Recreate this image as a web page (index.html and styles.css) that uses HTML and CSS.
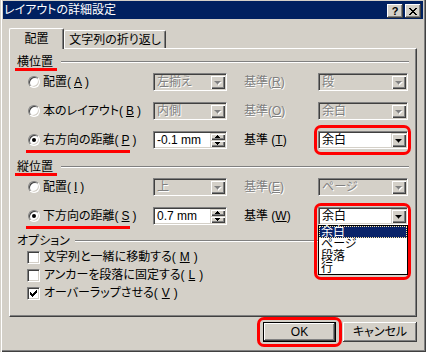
FILE: index.html
```html
<html>
    <head>
        <meta charset="utf-8">
        <title>レイアウトの詳細設定</title>
        <link rel="stylesheet" href="styles.css">
    </head>
    <body>
        <div class="window">
            <div class="titlebar">
                <span class="title">レイアウトの詳細設定</span>
                <span class="tbtn help">?</span>
                <span class="tbtn close">
                    <svg width="8" height="7" viewBox="0 0 8 7" shape-rendering="crispEdges"><path d="M0 0h2v1h1v1h2v-1h1v-1h2v1h-1v1h-1v1h-1v1h1v1h1v1h1v1h-2v-1h-1v-1h-2v1h-1v1h-2v-1h1v-1h1v-1h1v-1h-1v-1h-1v-1h-1z"/></svg>
                </span>
            </div>
            <div class="tabs">
                <div class="tab active">配置</div>
                <div class="tab">文字列の折り返し</div>
            </div>
            <div class="panel">
                <div class="group"><span class="gtitle mark">横位置</span><span class="rule"></span></div>
                <div class="rows">
                    <div class="row">
                        <label class="opt"><span class="radio"></span>配置(<u>A</u>)</label>
                        <div class="combo disabled"><span class="val">左揃え</span><span class="drop"><i></i></span></div>
                        <span class="lbl disabled">基準(<u>R</u>)</span>
                        <div class="combo wide disabled"><span class="val">段</span><span class="drop"><i></i></span></div>
                    </div>
                    <div class="row">
                        <label class="opt"><span class="radio"></span>本のレイアウト(<u>B</u>)</label>
                        <div class="combo disabled"><span class="val">内側</span><span class="drop"><i></i></span></div>
                        <span class="lbl disabled">基準(<u>O</u>)</span>
                        <div class="combo wide disabled"><span class="val">余白</span><span class="drop"><i></i></span></div>
                    </div>
                    <div class="row">
                        <label class="opt mark"><span class="radio on"></span>右方向の距離(<u>P</u>)</label>
                        <div class="combo"><span class="val">-0.1 mm</span><span class="spin"><span class="up"><i></i></span><span class="dn"><i></i></span></span></div>
                        <span class="lbl">基準 (<u>T</u>)</span>
                        <div class="combo wide hl"><span class="val">余白</span><span class="drop"><i></i></span></div>
                    </div>
                </div>

                <div class="group second"><span class="gtitle mark">縦位置</span><span class="rule"></span></div>
                <div class="rows">
                    <div class="row">
                        <label class="opt"><span class="radio"></span>配置(<u>I</u>)</label>
                        <div class="combo disabled"><span class="val">上</span><span class="drop"><i></i></span></div>
                        <span class="lbl disabled">基準(<u>E</u>)</span>
                        <div class="combo wide disabled"><span class="val">ページ</span><span class="drop"><i></i></span></div>
                    </div>
                    <div class="row">
                        <label class="opt mark"><span class="radio on"></span>下方向の距離(<u>S</u>)</label>
                        <div class="combo"><span class="val">0.7 mm</span><span class="spin"><span class="up"><i></i></span><span class="dn"><i></i></span></span></div>
                        <span class="lbl">基準 (<u>W</u>)</span>
                        <div class="combo wide hl open">
                            <span class="val">余白</span><span class="drop"><i></i></span>
                            <div class="list">
                                <div class="item sel">余白</div>
                                <div class="item">ページ</div>
                                <div class="item">段落</div>
                                <div class="item">行</div>
                            </div>
                        </div>
                    </div>
                </div>

                <div class="group third"><span class="gtitle">オプション</span><span class="rule"></span></div>
                <div class="checks">
                    <label class="chk"><span class="box"></span>文字列と一緒に移動する(<u>M</u>)</label>
                    <label class="chk"><span class="box"></span>アンカーを段落に固定する(<u>L</u>)</label>
                    <label class="chk"><span class="box on"><svg width="7" height="7" viewBox="0 0 7 7" shape-rendering="crispEdges"><path d="M0 2h1v3h-1zM1 3h1v3h-1zM2 4h1v3h-1zM3 3h1v3h-1zM4 2h1v3h-1zM5 1h1v3h-1zM6 0h1v3h-1z"/></svg></span>オーバーラップさせる(<u>V</u>)</label>
                </div>
            </div>
            <div class="footer">
                <button class="btn default hl">OK</button>
                <button class="btn">キャンセル</button>
            </div>
        </div>
    </body>
</html>
```

FILE: styles.css
```css
body{
    margin: 0;
    background: #d4d0c8;
    font-family: "Liberation Sans", "Noto Sans CJK JP", sans-serif;
    font-size: 12px;
    line-height: 12px;
    font-feature-settings: "palt";
    color: #000;
}
u{
    text-decoration-thickness: 1px;
    text-underline-offset: 1px;
}
.window{
    width: 426px;
    height: 352px;
    box-sizing: border-box;
    padding: 1px 3px 3px 3px;
    background: #d4d0c8;
    box-shadow: inset 1px 0 #d4d0c8, inset 2px 0 #fff, inset -1px -1px #404040, inset -2px -2px #808080;
}
.titlebar{
    display: flex;
    align-items: flex-start;
    height: 18px;
    padding: 0 2px 0 1px;
    background: #002060;
    color: #fff;
}
.title{
    flex: 1;
    line-height: 18px;
}
.tbtn{
    box-sizing: border-box;
    width: 16px;
    height: 14px;
    margin-top: 3px;
    display: flex;
    align-items: center;
    justify-content: center;
    background: #d4d0c8;
    color: #000;
    box-shadow: inset -1px -1px #404040, inset 1px 1px #fff, inset -2px -2px #808080;
}
.help{
    margin-right: 2px;
    font-weight: bold;
    font-size: 11px;
}
.tabs{
    display: flex;
    align-items: flex-end;
    height: 20px;
    margin-top: 9px;
    padding-left: 6px;
}
.tab{
    box-sizing: border-box;
    height: 18px;
    width: 102px;
    display: flex;
    align-items: center;
    justify-content: center;
    border: 1px solid;
    border-color: #fff #404040 transparent #fff;
    border-bottom: none;
    border-radius: 2px 2px 0 0;
    box-shadow: inset -1px 0 #808080;
    background: #d4d0c8;
}
.tab.active{
    width: 55px;
    height: 21px;
    margin-bottom: -1px;
    position: relative;
    z-index: 1;
}
.panel{
    box-sizing: border-box;
    height: 269px;
    margin: 0 6px;
    padding: 6px 7px 0 7px;
    border: 1px solid;
    border-color: #fff #404040 #404040 #fff;
    box-shadow: inset -1px -1px #808080;
}
.group{
    display: flex;
    align-items: center;
    height: 14px;
}
.group.second{
    margin-top: 11px;
}
.group.third{
    margin-top: 9px;
}
.gtitle{
    margin-right: 8px;
    white-space: nowrap;
}
.third .gtitle{
    margin-right: 5px;
}
.rule{
    flex: 1;
    border-top: 1px solid #808080;
    border-bottom: 1px solid #fff;
}
.mark{
    position: relative;
}
.gtitle.mark::after{
    content: '';
    position: absolute;
    left: -2px;
    right: -4px;
    bottom: -3px;
    height: 3px;
    background: #f00;
}
.opt.mark::after{
    content: '';
    position: absolute;
    left: -2px;
    width: 104px;
    bottom: -4px;
    height: 3px;
    background: #f00;
}
.rows{
    display: flex;
    flex-direction: column;
    gap: 11px;
    margin-top: 4px;
    padding-left: 11px;
}
.row{
    display: grid;
    grid-template-columns: 125px 90px 75px 90px;
    height: 18px;
    align-items: center;
}
.opt{
    display: flex;
    align-items: center;
    gap: 3px;
    height: 18px;
    white-space: nowrap;
}
.radio{
    box-sizing: border-box;
    width: 12px;
    height: 12px;
    border-radius: 50%;
    border: 1px solid;
    border-color: #808080 #fff #fff #808080;
    box-shadow: inset 1px 1px #404040, inset -1px -1px #d4d0c8;
    background: #fff;
    display: flex;
    align-items: center;
    justify-content: center;
}
.radio.on::after{
    content: '';
    width: 4px;
    height: 4px;
    border-radius: 50%;
    background: #000;
}
.disabled{
    color: #808080;
    text-shadow: 1px 1px 0 #fff;
}
.combo{
    box-sizing: border-box;
    width: 74px;
    height: 18px;
    display: flex;
    padding: 1px;
    border: 1px solid;
    border-color: #808080 #fff #fff #808080;
    box-shadow: inset 1px 1px #404040, inset -1px -1px #d4d0c8;
    background: #fff;
    color: #000;
    text-shadow: none;
}
.combo.wide{
    width: 90px;
}
.combo.disabled{
    background: #d4d0c8;
}
.val{
    flex: 1;
    padding-left: 2px;
    line-height: 14px;
    white-space: nowrap;
}
.disabled .val{
    color: #808080;
    text-shadow: 1px 1px 0 #fff;
}
.drop, .spin .up, .spin .dn{
    box-sizing: border-box;
    width: 15px;
    height: 14px;
    display: flex;
    align-items: center;
    justify-content: center;
    background: #d4d0c8;
    box-shadow: inset 1px 1px #d4d0c8, inset 2px 2px #fff, inset -1px -1px #404040, inset -2px -2px #808080;
}
.drop i::after{
    content: '';
    display: block;
    width: 7px;
    height: 4px;
    margin-top: 1px;
    background: #000;
    clip-path: polygon(0 0, 7px 0, 7px 1px, 6px 1px, 6px 2px, 5px 2px, 5px 3px, 4px 3px, 4px 4px, 3px 4px, 3px 3px, 2px 3px, 2px 2px, 1px 2px, 1px 1px, 0 1px);
}
.disabled .drop i{
    filter: drop-shadow(1px 1px 0 #fff);
}
.disabled .drop i::after{
    background: #808080;
}
.spin{
    display: flex;
    flex-direction: column;
}
.spin .up, .spin .dn{
    height: 7px;
}
.spin i::after{
    content: '';
    display: block;
    width: 5px;
    height: 3px;
    background: #000;
}
.spin .up i::after{
    clip-path: polygon(2px 0, 3px 0, 3px 1px, 4px 1px, 4px 2px, 5px 2px, 5px 3px, 0 3px, 0 2px, 1px 2px, 1px 1px, 2px 1px);
}
.spin .dn i::after{
    clip-path: polygon(0 0, 5px 0, 5px 1px, 4px 1px, 4px 2px, 3px 2px, 3px 3px, 2px 3px, 2px 2px, 1px 2px, 1px 1px, 0 1px);
}
.lbl{
    padding-left: 1px;
    white-space: nowrap;
}
.hl{
    position: relative;
}
.combo.hl::before{
    content: '';
    position: absolute;
    left: -5px;
    right: -4px;
    top: -7px;
    bottom: -7px;
    border: 3px solid #f00;
    border-radius: 7px;
    pointer-events: none;
}
.combo.open::before{
    top: -5px;
    bottom: -56px;
}
.list{
    position: absolute;
    top: calc(100% + 1px);
    left: -1px;
    right: -1px;
    z-index: 2;
    border: 1px solid #000;
    background: #fff;
}
.item{
    height: 12px;
    line-height: 12px;
    padding-left: 2px;
    white-space: nowrap;
}
.item.sel{
    background: #0a246a;
    color: #fff;
    outline: 1px dotted #ffe9a0;
    outline-offset: -1px;
}
.checks{
    display: flex;
    flex-direction: column;
    padding-left: 10px;
}
.chk{
    display: flex;
    align-items: center;
    gap: 4px;
    height: 18px;
    white-space: nowrap;
}
.box{
    box-sizing: border-box;
    width: 13px;
    height: 13px;
    display: flex;
    align-items: center;
    justify-content: center;
    border: 1px solid;
    border-color: #808080 #fff #fff #808080;
    box-shadow: inset 1px 1px #404040, inset -1px -1px #d4d0c8;
    background: #fff;
}
.footer{
    display: flex;
    justify-content: flex-end;
    gap: 7px;
    margin-top: 5px;
    padding-right: 6px;
}
.btn{
    box-sizing: border-box;
    width: 74px;
    height: 20px;
    padding: 0;
    border: none;
    background: #d4d0c8;
    font: inherit;
    color: #000;
    box-shadow: inset -1px -1px #404040, inset 1px 1px #fff, inset -2px -2px #808080;
}
.btn.default{
    width: 73px;
    border: 1px solid #000;
}
.btn.hl::after{
    content: '';
    position: absolute;
    left: -7px;
    right: -7px;
    top: -6px;
    bottom: -6px;
    border: 3px solid #f00;
    border-radius: 7px;
}
```
